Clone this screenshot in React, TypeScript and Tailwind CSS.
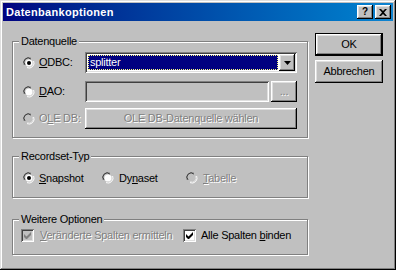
import React from 'react';

const raised =
  'bg-[#c0c0c0] shadow-[inset_-1px_-1px_0_#000,inset_1px_1px_0_#fff,inset_-2px_-2px_0_#808080,inset_2px_2px_0_#dfdfdf]';
const sunken =
  'shadow-[inset_1px_1px_0_#808080,inset_-1px_-1px_0_#fff,inset_2px_2px_0_#404040,inset_-2px_-2px_0_#dfdfdf]';
const disabledText = 'text-[#808080] [text-shadow:1px_1px_0_#fff]';

function Radio({ checked, disabled }: { checked?: boolean; disabled?: boolean }) {
  return (
    <svg width="12" height="12" viewBox="0 0 12 12" className="shrink-0">
      <path d="M8 1.2A5 5 0 0 0 1.2 8" fill="none" stroke="#808080" strokeWidth="1" />
      <path d="M8 2.2A4 4 0 0 0 2.2 8" fill="none" stroke="#404040" strokeWidth="1" />
      <circle cx="6" cy="6" r="3.6" fill={disabled ? '#c0c0c0' : '#fff'} />
      <path d="M10.6 4A5 5 0 0 1 4 10.6" fill="none" stroke="#fff" strokeWidth="1" />
      <path d="M9.6 4.2A4 4 0 0 1 4.2 9.6" fill="none" stroke="#dfdfdf" strokeWidth="1" />
      {checked && <circle cx="6" cy="6" r="2" fill={disabled ? '#808080' : '#000'} />}
    </svg>
  );
}

function Checkbox({ checked, disabled }: { checked?: boolean; disabled?: boolean }) {
  return (
    <div className={`w-[13px] h-[13px] shrink-0 ${sunken} ${disabled ? 'bg-[#c0c0c0]' : 'bg-white'} flex items-center justify-center`}>
      {checked && (
        <svg width="7" height="7" viewBox="0 0 7 7">
          <path d="M0 2v3l2 2h1l4-4V0L2.5 4.5z" fill={disabled ? '#808080' : '#000'} />
        </svg>
      )}
    </div>
  );
}

function GroupBox({ label, className, children }: { label: string; className: string; children: React.ReactNode }) {
  return (
    <div className={`relative border border-[#808080] shadow-[1px_1px_0_#fff,inset_1px_1px_0_#fff] ${className}`}>
      <span className="absolute -top-[8px] left-[6px] bg-[#c0c0c0] px-[2px] leading-[14px]">{label}</span>
      {children}
    </div>
  );
}

export default function App() {
  return (
    <div
      className="w-[396px] h-[270px] bg-[#c0c0c0] p-[3px] text-[11px] tracking-[-0.25px] text-black shadow-[inset_-1px_-1px_0_#000,inset_1px_1px_0_#dfdfdf,inset_-2px_-2px_0_#808080,inset_2px_2px_0_#fff] overflow-hidden"
      style={{ fontFamily: '"Liberation Sans", Arial, sans-serif' }}
    >
      {/* Title bar */}
      <div className="h-[18px] flex items-center justify-between pl-[3px] pr-[2px] bg-gradient-to-r from-[#000080] to-[#1084d0]">
        <span className="text-white font-bold text-[11px] tracking-[0.3px]">Datenbankoptionen</span>
        <div className="flex items-center">
          <button className={`w-[16px] h-[14px] ${raised} flex items-center justify-center text-[10px] font-bold leading-none`}>?</button>
          <button className={`ml-[2px] w-[16px] h-[14px] ${raised} flex items-center justify-center`}>
            <svg width="8" height="7" viewBox="0 0 8 7">
              <path d="M0 0h2l2 2 2-2h2L5 3.5 8 7H6L4 5 2 7H0l3-3.5z" fill="#000" />
            </svg>
          </button>
        </div>
      </div>

      {/* Body */}
      <div className="flex pl-[9px]">
        <div className="w-[296px] flex flex-col">
          <GroupBox label="Datenquelle" className="mt-[20px] h-[97px]">
            <div className="flex items-center h-[21px] mt-[10px] pl-[10px]">
              <div className="w-[62px] flex items-center">
                <Radio checked />
                <span className="ml-[4px]"><u>O</u>DBC:</span>
              </div>
              <div className={`w-[212px] h-[21px] bg-white ${sunken} p-[2px] flex`}>
                <div className="flex-1 m-[1px] bg-[#000080] outline-1 outline-dotted outline-[#ffff80] -outline-offset-1 text-white pl-[2px] leading-[15px]">
                  splitter
                </div>
                <div className={`w-[16px] h-[17px] ${raised} flex items-center justify-center`}>
                  <svg width="7" height="4" viewBox="0 0 7 4">
                    <path d="M0 0h7L3.5 4z" fill="#000" />
                  </svg>
                </div>
              </div>
            </div>
            <div className="flex items-center h-[21px] mt-[8px] pl-[10px]">
              <div className="w-[62px] flex items-center">
                <Radio />
                <span className="ml-[4px]"><u>D</u>AO:</span>
              </div>
              <div className={`w-[184px] h-[21px] bg-[#c0c0c0] ${sunken}`} />
              <div className={`ml-[2px] w-[26px] h-[21px] ${raised} flex items-center justify-center ${disabledText}`}>...</div>
            </div>
            <div className="flex items-center h-[21px] mt-[6px] pl-[10px]">
              <div className="w-[62px] flex items-center">
                <Radio disabled />
                <span className={`ml-[4px] ${disabledText}`}>O<u>L</u>E DB:</span>
              </div>
              <div className={`w-[212px] h-[21px] ${raised} flex items-center justify-center ${disabledText}`}>
                OLE DB-Datenquelle wählen
              </div>
            </div>
          </GroupBox>

          <GroupBox label="Recordset-Typ" className="mt-[18px] h-[42px]">
            <div className="flex items-center h-[12px] mt-[15px] pl-[10px]">
              <div className="w-[79px] flex items-center">
                <Radio checked />
                <span className="ml-[4px]"><u>S</u>napshot</span>
              </div>
              <div className="w-[84px] flex items-center">
                <Radio />
                <span className="ml-[5px]">Dy<u>n</u>aset</span>
              </div>
              <div className="flex items-center">
                <Radio disabled />
                <span className={`ml-[5px] ${disabledText}`}><u>T</u>abelle</span>
              </div>
            </div>
          </GroupBox>

          <GroupBox label="Weitere Optionen" className="mt-[21px] h-[36px]">
            <div className="flex items-center h-[13px] mt-[9px] pl-[8px]">
              <div className="w-[162px] flex items-center">
                <Checkbox checked disabled />
                <span className={`ml-[6px] ${disabledText}`}><u>V</u>eränderte Spalten ermitteln</span>
              </div>
              <div className="flex items-center">
                <Checkbox checked />
                <span className="ml-[5px]">Alle Spalten <u>b</u>inden</span>
              </div>
            </div>
          </GroupBox>
        </div>

        <div className="ml-[7px] mt-[12px] flex flex-col">
          <div className="w-[68px] h-[23px] border border-black">
            <button className={`w-full h-full ${raised} flex items-center justify-center`}>OK</button>
          </div>
          <button className={`mt-[4px] w-[68px] h-[23px] ${raised} flex items-center justify-center`}>Abbrechen</button>
        </div>
      </div>
    </div>
  );
}
